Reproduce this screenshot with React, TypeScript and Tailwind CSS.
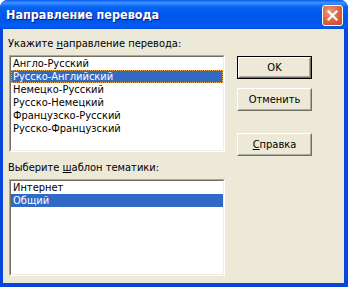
import React from "react";

const FONT = { fontFamily: '"DejaVu Sans Condensed", "DejaVu Sans", sans-serif' };

function ListBox({ items, selected, focus }: { items: string[]; selected: number; focus?: boolean }) {
  return (
    <div className="h-[97px] w-[216px] border border-t-[#ACA899] border-l-[#ACA899] border-b-white border-r-white">
      <div className="h-full w-full border border-t-[#716F64] border-l-[#716F64] border-b-[#F1EFE2] border-r-[#F1EFE2] bg-white">
        {items.map((it, i) => (
          <div
            key={it}
            className={
              "h-[13px] pl-[2px] text-[11px] leading-[13px] whitespace-nowrap " +
              (i === selected ? "bg-[#316AC5] text-white" : "text-black") +
              (i === selected && focus ? " outline outline-1 outline-dotted outline-[#E8A848] -outline-offset-1" : "")
            }
          >
            {it}
          </div>
        ))}
      </div>
    </div>
  );
}

function Button({ children, def }: { children: React.ReactNode; def?: boolean }) {
  const inner = (
    <div className="flex-1 border border-t-white border-l-white border-b-[#716F64] border-r-[#716F64] flex">
      <div className="flex-1 border border-t-transparent border-l-transparent border-b-[#ACA899] border-r-[#ACA899] flex items-center justify-center text-[11px] text-black leading-[13px]">
        {children}
      </div>
    </div>
  );
  return (
    <div className={"w-[75px] h-[23px] bg-[#ECE9D8] flex " + (def ? "border border-black" : "")}>
      {inner}
    </div>
  );
}

export default function App() {
  return (
    <div className="w-[348px] h-[287px] flex flex-col bg-[#0845DA] rounded-t-[8px] overflow-hidden" style={FONT}>
      <div className="h-[29px] flex items-center pl-[6px] pr-[5px] bg-[linear-gradient(to_bottom,#0A5CF0_0%,#3D95FF_10%,#0A66F6_22%,#0058EE_45%,#0055E8_75%,#0060F6_90%,#0048DC_100%)]">
        <div
          className="flex-1 text-white font-bold text-[12.5px] leading-none pt-[1px]"
          style={{ fontFamily: '"DejaVu Sans Condensed", "DejaVu Sans", sans-serif', textShadow: "1px 1px 0 #0A1883" }}
        >
          Направление перевода
        </div>
        <div className="w-[21px] h-[21px] rounded-[3px] border border-white bg-[radial-gradient(circle_at_35%_30%,#F29A7A_0%,#E26A43_45%,#C9431E_100%)] flex items-center justify-center mt-[1px]">
          <svg width="11" height="11" viewBox="0 0 11 11">
            <path d="M1.5 1.5 L9.5 9.5 M9.5 1.5 L1.5 9.5" stroke="white" strokeWidth="2.2" strokeLinecap="square" />
          </svg>
        </div>
      </div>
      <div className="flex-1 ml-[3px] mr-[4px] mb-[4px] bg-[#ECE9D8] flex pl-[6px]">
        <div className="flex flex-col w-[216px] pt-[8px]">
          <div className="text-[11px] leading-[13px] text-black -ml-[1px] h-[13px] whitespace-nowrap">
            Укажите <span className="underline">н</span>аправление перевода:
          </div>
          <div className="mt-[5px]">
            <ListBox
              items={["Англо-Русский", "Русско-Английский", "Немецко-Русский", "Русско-Немецкий", "Французско-Русский", "Русско-Французский"]}
              selected={1}
              focus
            />
          </div>
          <div className="mt-[9px] text-[11px] leading-[13px] text-black -ml-[1px] h-[13px] whitespace-nowrap">
            Выберите <span className="underline">ш</span>аблон тематики:
          </div>
          <div className="mt-[5px]">
            <ListBox items={["Интернет", "Общий"]} selected={1} />
          </div>
        </div>
        <div className="flex flex-col ml-[12px] pt-[27px]">
          <Button def>OK</Button>
          <div className="mt-[9px]">
            <Button>Отменить</Button>
          </div>
          <div className="mt-[22px]">
            <Button>
              <span>
                <span className="underline">С</span>правка
              </span>
            </Button>
          </div>
        </div>
      </div>
    </div>
  );
}
